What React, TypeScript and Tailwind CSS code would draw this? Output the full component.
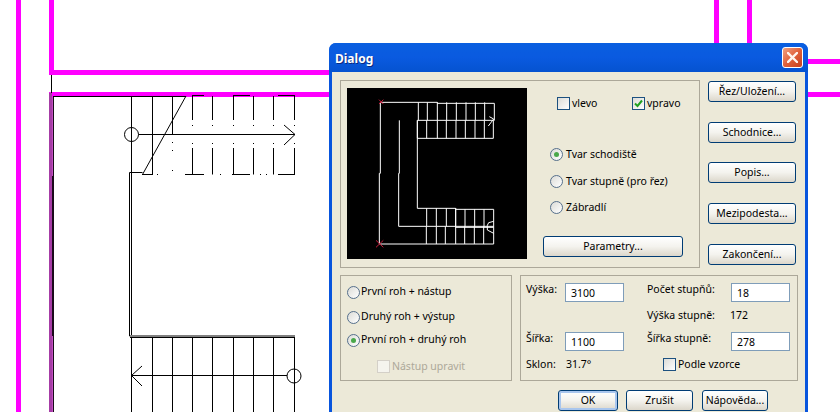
import type { ReactNode } from 'react'

const font = { fontFamily: '"Noto Sans", "Liberation Sans", sans-serif' }

function Btn({ children, className = '', primary = false }: { children: ReactNode; className?: string; primary?: boolean }) {
  return (
    <button
      className={`flex h-[21px] items-center justify-center rounded-[3px] border border-[#003c74] bg-gradient-to-b from-white via-[#f4f3ee] to-[#dcd7cb] text-[10.5px] leading-none text-black ${
        primary ? 'shadow-[inset_0_0_0_2px_#a9c6ee]' : ''
      } ${className}`}
    >
      {children}
    </button>
  )
}

function Radio({ label, checked = false, className = '', gap = 'ml-px mb-[3px]' }: { label: string; checked?: boolean; className?: string; gap?: string }) {
  return (
    <div className={`flex h-[13px] items-center ${className}`}>
      <span className="flex h-[13px] w-[13px] shrink-0 items-center justify-center rounded-full border border-[#56708c] bg-gradient-to-br from-[#dcdcd7] to-white">
        {checked && <span className="h-[5px] w-[5px] rounded-full bg-[#4aa84a]" />}
      </span>
      <span className={`${gap} whitespace-nowrap text-[10.5px] leading-none text-black`}>{label}</span>
    </div>
  )
}

function Check({ label, checked = false, disabled = false, className = '' }: { label: string; checked?: boolean; disabled?: boolean; className?: string }) {
  return (
    <div className={`flex h-[13px] items-center ${className}`}>
      <span
        className={`flex h-[13px] w-[13px] shrink-0 items-center justify-center border ${
          disabled ? 'border-[#d4d0c8] bg-[#f5f4ee]' : 'border-[#1c5180] bg-gradient-to-br from-[#dcdcd7] to-white'
        }`}
      >
        {checked && (
          <svg width="9" height="9" viewBox="0 0 9 9">
            <path d="M1 4.5 L3.5 7 L8 1.5" fill="none" stroke="#21a121" strokeWidth="2" />
          </svg>
        )}
      </span>
      <span className={`ml-[2px] whitespace-nowrap text-[10.5px] leading-none ${disabled ? 'text-[#aca899]' : 'text-black'}`}>{label}</span>
    </div>
  )
}

function Input({ value }: { value: string }) {
  return (
    <div className="flex h-[19px] w-[59px] items-end border border-[#7f9db9] bg-white pb-[3px] pl-[5px] text-[10.5px] leading-none text-black">
      {value}
    </div>
  )
}

// Stair plan behind the dialog
function Plan() {
  const broken = [192.5, 212.5, 233.5, 253.5, 273.5, 294.5]
  return (
    <svg className="absolute left-0 top-0" width="840" height="412" viewBox="0 0 840 412">
      <g fill="#ff00ff">
        <rect x="16" y="0" width="5" height="412" />
        <rect x="49" y="0" width="5" height="75" />
        <rect x="49" y="70" width="291" height="5" />
        <rect x="49" y="92" width="291" height="5" />
        <rect x="714" y="0" width="5" height="50" />
        <rect x="747" y="0" width="5" height="50" />
        <rect x="800" y="59" width="40" height="5" />
        <rect x="800" y="92" width="40" height="5" />
      </g>
      <rect x="49" y="93" width="3" height="319" fill="#a63ca6" />
      <rect x="52" y="97" width="1" height="315" fill="#c050c0" />
      <rect x="53" y="97" width="1" height="315" fill="#1a0a1a" />
      <rect x="52" y="176" width="2" height="160" fill="#1a0a1a" />
      <g fill="none" stroke="#000" strokeWidth="1">
        <path d="M51.5 75V93M53 96.5H186M186 96L142.5 174.5" />
        <path d="M131.5 96V172M152.5 96V174.5M172.5 96V134" />
        <path d="M172.5 142V158M172.5 170V174.5" strokeDasharray="1 7" />
        {broken.map((x) => (
          <path key={x} d={`M${x} 96V120M${x} 148V174.5`} />
        ))}
        {broken.map((x) => (
          <path key={x} d={`M${x} 125V145`} strokeDasharray="1 8" />
        ))}
        <path d="M192 95.5H204M233 95.5H250M278 95.5H295M142 174.5H153M185 174.5H204M232 174.5H250M278 174.5H295" />
        <path d="M157 174.5H163M220 174.5H225M260 174.5H270" strokeDasharray="1 5" />
        <circle cx="131.5" cy="134.5" r="7" />
        <path d="M138.5 134.5H295M284 125L295 134.5L284 145" />
        <path d="M142.5 172.5H129.5V336H295M131.5 172.5V335M130 337.5H295" />
        {[131.5, 152.5, 172.5, 192.5, 212.5, 233.5, 253.5, 273.5, 294.5].map((x) => (
          <path key={x} d={`M${x} 337V412`} />
        ))}
        <circle cx="294" cy="376" r="7" />
        <path d="M131.5 375.5H287M142 366L131.5 375.5L142 386" />
      </g>
    </svg>
  )
}

// Small preview of the staircase, coordinates taken 1:3
function Preview() {
  const top1 = [271, 298, 328, 356, 385, 414, 442, 470]
  const top2 = [268, 296, 328, 355, 384, 412, 441, 469]
  const bot1 = [296, 325, 355, 383]
  const bot2 = [411, 440, 468]
  const bot3 = [295, 325, 352, 383, 410, 439, 467]
  return (
    <svg className="block bg-black" width="180" height="171" viewBox="57 144 540 513">
      <g fill="none" stroke="#fff" strokeWidth="3">
        <path d="M157 187V400H154V612H497V508H383V505H268V241H496M214 241V400H212V559H497M383 505V562H497" />
        <path d="M157 187H328V190H499V241H496V295H268" />
        {top1.map((x) => (
          <path key={x} d={`M${x} 187V241`} />
        ))}
        {top2.map((x) => (
          <path key={x} d={`M${x} 241V295`} />
        ))}
        {bot1.map((x) => (
          <path key={x} d={`M${x} 505V559`} />
        ))}
        {bot2.map((x) => (
          <path key={x} d={`M${x} 508V562`} />
        ))}
        {bot3.map((x) => (
          <path key={x} d={`M${x} 559V612`} />
        ))}
        <path d="M484 230L497 237L481 258" />
        <path d="M497 544L482 548L478 556V570L497 580" />
      </g>
      <path d="M153 179L166 192M166 179L153 192M144 601L166 622M166 601L144 622" fill="none" stroke="#c81e3c" strokeWidth="3" />
    </svg>
  )
}

export default function App() {
  return (
    <div className="relative h-[412px] w-[840px] overflow-hidden bg-white" style={font}>
      <Plan />

      <div className="absolute left-[329px] top-[43px] w-[479px] rounded-t-[7px] bg-[#0855dd]">
        <div className="flex h-[29px] items-center justify-between rounded-t-[7px] bg-gradient-to-b from-[#0a5fe0] via-[#0a5ae0] to-[#0553d0] pl-[6px] pr-[5px]">
          <span className="mt-[3px] text-[12px] font-bold leading-none text-white [text-shadow:1px_1px_0_#0a2a80]">Dialog</span>
          <span className="flex h-[21px] w-[21px] items-center justify-center rounded-[3px] border border-white bg-gradient-to-br from-[#f0a080] via-[#e0603a] to-[#c8401c]">
            <svg width="11" height="11" viewBox="0 0 11 11">
              <path d="M1 1L10 10M10 1L1 10" stroke="#fff5ee" strokeWidth="2.4" strokeLinecap="square" />
            </svg>
          </span>
        </div>

        <div className="mx-[3px] h-[340px] bg-[#ece9d8] pl-[8px] pt-[8px]">
          <div className="flex">
            <div className="flex h-[188px] w-[360px] border border-[#aca899] pl-[6px] pt-[7px]">
              <Preview />
              <div className="ml-[16px] flex flex-col">
                <div className="ml-[14px] mt-[9px] flex h-[13px]">
                  <Check label="vlevo" className="w-[75px]" />
                  <Check label="vpravo" checked />
                </div>
                <Radio label="Tvar schodiště" checked gap="ml-[3px]" className="ml-[7px] mt-[38px]" />
                <Radio label="Tvar stupně (pro řez)" gap="ml-[3px]" className="ml-[7px] mt-[14px]" />
                <Radio label="Zábradlí" gap="ml-[3px]" className="ml-[7px] mt-[13px]" />
                <Btn className="mt-[22px] w-[140px]">Parametry...</Btn>
              </div>
            </div>
            <div className="ml-[8px] mt-px flex w-[88px] flex-col">
              <Btn className="w-full">Řez/Uložení...</Btn>
              <Btn className="mt-[20px] w-full">Schodnice...</Btn>
              <Btn className="mt-[19px] w-full">Popis...</Btn>
              <Btn className="mt-[20px] w-full">Mezipodesta...</Btn>
              <Btn className="mt-[20px] w-full">Zakončení...</Btn>
            </div>
          </div>

          <div className="mt-[7px] flex">
            <div className="flex h-[106px] w-[172px] flex-col border border-[#aca899] pl-[6px] pt-[10px]">
              <Radio label="První roh + nástup" />
              <Radio label="Druhý roh + výstup" className="mt-[12px]" />
              <Radio label="První roh + druhý roh" checked className="mt-[10px]" />
              <Check label="Nástup upravit" disabled className="ml-[30px] mt-[13px]" />
            </div>
            <div className="ml-[8px] h-[106px] w-[278px] border border-[#aca899] pl-[5px] pt-[7px] text-[10.5px] leading-none text-black">
              <div className="flex h-[19px]">
                <span className="mt-[1px] w-[39px]">Výška:</span>
                <Input value="3100" />
                <span className="ml-[23px] mt-[1px] w-[84px]">Počet stupňů:</span>
                <Input value="18" />
              </div>
              <div className="mt-[5px] flex h-[19px]">
                <span className="ml-[121px] mt-[3px] w-[83px]">Výška stupně:</span>
                <span className="mt-[3px]">172</span>
              </div>
              <div className="mt-[6px] flex h-[19px]">
                <span className="mt-[1px] w-[39px]">Šířka:</span>
                <Input value="1100" />
                <span className="ml-[23px] mt-[1px] w-[84px]">Šířka stupně:</span>
                <Input value="278" />
              </div>
              <div className="mt-[6px] flex h-[14px] items-center">
                <span className="w-[40px]">Sklon:</span>
                <span className="w-[97px]">31.7°</span>
                <Check label="Podle vzorce" />
              </div>
            </div>
          </div>

          <div className="ml-[218px] mt-[9px] flex">
            <Btn primary className="w-[60px]">OK</Btn>
            <Btn className="ml-[8px] w-[67px]">Zrušit</Btn>
            <Btn className="ml-[9px] w-[66px]">Nápověda...</Btn>
          </div>
        </div>
      </div>
    </div>
  )
}
